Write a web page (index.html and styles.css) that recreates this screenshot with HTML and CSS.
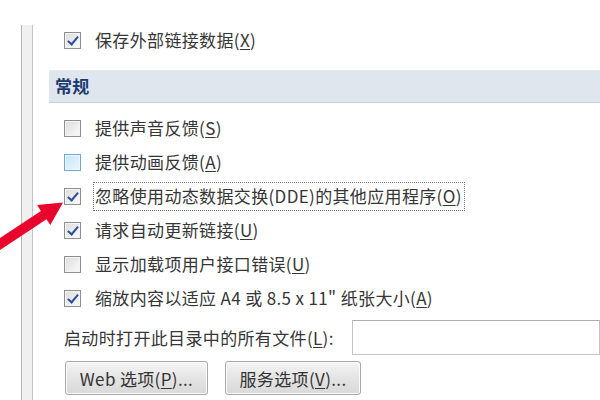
FILE: index.html
```html
<!DOCTYPE html>
<html lang="zh-CN">
<head>
    <meta charset="UTF-8">
    <title>Excel 选项 - 高级</title>
    <link rel="stylesheet" href="styles.css">
</head>
<body>
    <div class="wrap">
        <div class="rail"></div>
        <div class="main">
            <div class="row first">
                <span class="box checked"></span>
                <span class="label">保存外部链接数据(<u>X</u>)</span>
            </div>
            <div class="section">常规</div>
            <div class="list">
                <div class="row">
                    <span class="box"></span>
                    <span class="label">提供声音反馈(<u>S</u>)</span>
                </div>
                <div class="row">
                    <span class="box hover"></span>
                    <span class="label">提供动画反馈(<u>A</u>)</span>
                </div>
                <div class="row">
                    <span class="box checked"></span>
                    <span class="label focus">忽略使用动态数据交换(DDE)的其他应用程序(<u>O</u>)</span>
                </div>
                <div class="row">
                    <span class="box checked"></span>
                    <span class="label">请求自动更新链接(<u>U</u>)</span>
                </div>
                <div class="row">
                    <span class="box"></span>
                    <span class="label">显示加载项用户接口错误(<u>U</u>)</span>
                </div>
                <div class="row">
                    <span class="box checked"></span>
                    <span class="label">缩放内容以适应 A4 或 8.5 x 11" 纸张大小(<u>A</u>)</span>
                </div>
            </div>
            <div class="field">
                <span class="field-label">启动时打开此目录中的所有文件(<u>L</u>):</span>
                <span class="input"></span>
            </div>
            <div class="buttons">
                <button class="btn web">Web 选项(<u>P</u>)...</button>
                <button class="btn svc">服务选项(<u>V</u>)...</button>
            </div>
        </div>
    </div>
    <!-- 红色箭头，压在内容上方 -->
    <svg class="arrow" width="600" height="400" viewBox="0 0 600 400">
        <polygon fill="#e8062c" points="-6.1,254.1 -11.7,245.7 40.9,210.9 37.1,205.1 63,202.5 50.3,225.1 46.5,219.3"/>
    </svg>
</body>
</html>
```

FILE: styles.css
```css
html, body {
    margin: 0;
    padding: 0;
    background: #fff;
}
body {
    width: 600px;
    height: 400px;
    overflow: hidden;
    position: relative;
    font-family: "Noto Sans CJK SC", "Liberation Sans", sans-serif;
    font-size: 17px;
    color: #363636;
    letter-spacing: 0.35px;
}
u {
    text-decoration: underline;
    text-underline-offset: 2px;
}
.wrap {
    display: flex;
    height: 400px;
}
.rail {
    width: 10px;
    margin: 25px 0 0 21px;
    background: #f0f0f0;
    border-left: 1px solid #b7b7b7;
    border-right: 1px solid #c4c4c4;
}
.main {
    flex: 1;
    padding-left: 16px;
    padding-top: 23px;
}
.row {
    display: flex;
    align-items: center;
    height: 34px;
    padding-left: 15px;
}
.row.first {
    margin-bottom: 13px;
}
.box {
    width: 15px;
    height: 15px;
    border: 1px solid #8e8f8f;
    background: linear-gradient(135deg, #dcdcdc, #fbfbfb);
    box-shadow: inset 0 0 0 1px #f4f4f4;
    margin-right: 12px;
    position: relative;
    flex: none;
}
.box.hover {
    border-color: #6fa8d5;
    background: linear-gradient(135deg, #c4e6fb, #eaf7ff);
}
.box.checked::after {
    content: '';
    position: absolute;
    left: 5px;
    top: 1px;
    width: 4px;
    height: 9px;
    border: solid #2c4e9e;
    border-width: 0 2px 2px 0;
    transform: rotate(40deg);
}
.label {
    white-space: nowrap;
    line-height: 20px;
    border: 1px dotted transparent;
    padding: 3px 2px 4px 1px;
}
.label.focus {
    border-color: #777;
}
.section {
    height: 31px;
    line-height: 30px;
    padding-left: 6px;
    background: #dfe6ee;
    border-top: 1px solid #e8edf2;
    border-bottom: 1px solid #c9d0d8;
    font-weight: bold;
    color: #1e3b70;
    margin-bottom: 8px;
}
.field {
    display: flex;
    align-items: center;
    height: 36px;
    padding-left: 15px;
    margin-top: 4px;
}
.field-label {
    white-space: nowrap;
    width: 288px;
}
.input {
    flex: 1;
    height: 33px;
    border: 1px solid #c2c4c8;
    border-top-color: #abadb3;
}
.buttons {
    display: flex;
    gap: 17px;
    padding-left: 16px;
    margin-top: 6px;
}
.btn {
    height: 34px;
    font-family: inherit;
    font-size: 17px;
    letter-spacing: 0.35px;
    color: #333;
    border: 1px solid #a8a8a8;
    border-radius: 3px;
    background: linear-gradient(#f6f6f6, #e4e4e4 50%, #d9d9d9);
    box-shadow: inset 0 0 0 1px #fbfbfb;
    padding: 0;
}
.btn.web {
    width: 143px;
}
.btn.svc {
    width: 136px;
}
.arrow {
    position: absolute;
    left: 0;
    top: 0;
}
```
